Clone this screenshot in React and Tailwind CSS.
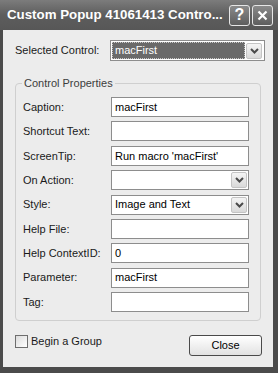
import React from 'react'

const font = { fontFamily: '"Liberation Sans", Arial, sans-serif' }

const Chevron = () => (
  <svg width="9" height="6" viewBox="0 0 9 6">
    <path d="M1 1 L4.5 4.5 L8 1" fill="none" stroke="#4a4a4a" strokeWidth="2" />
  </svg>
)

const DropButton = () => (
  <div className="w-[16px] h-[16px] mr-[1px] shrink-0 flex items-center justify-center rounded-[2px] border border-[#c4c4c4] bg-gradient-to-b from-[#f4f4f4] to-[#d9d9d9]">
    <Chevron />
  </div>
)

const Field = ({ label, value, combo }) => (
  <div className="flex items-center h-[20px]">
    <span className="w-[95px] shrink-0 pl-[7px] text-[11px] text-[#1a1a1a]">{label}</span>
    <div className="w-[138px] h-[20px] shrink-0 flex items-center justify-between border border-[#8d8d8d] bg-white">
      <span className="pl-[3px] text-[11px] text-black">{value}</span>
      {combo && <DropButton />}
    </div>
  </div>
)

const rows = [
  { label: 'Caption:', value: 'macFirst' },
  { label: 'Shortcut Text:', value: '' },
  { label: 'ScreenTip:', value: "Run macro 'macFirst'" },
  { label: 'On Action:', value: '', combo: true },
  { label: 'Style:', value: 'Image and Text', combo: true },
  { label: 'Help File:', value: '' },
  { label: 'Help ContextID:', value: '0' },
  { label: 'Parameter:', value: 'macFirst' },
  { label: 'Tag:', value: '' },
]

export default function App() {
  return (
    <div className="w-[278px] h-[373px] bg-[#4b4b4b] flex flex-col overflow-hidden" style={font}>
      {/* title bar */}
      <div className="h-[30px] flex items-center pl-[7px] pr-[5px] bg-gradient-to-b from-[#7c7c7c] via-[#5d5d5d] to-[#575757]">
        <span className="flex-1 text-white font-bold text-[13.3px] whitespace-nowrap">Custom Popup 41061413 Contro...</span>
        <div className="flex gap-[2px]">
          <div className="w-[21px] h-[21px] rounded-[3px] border border-[#e6e6e6] bg-gradient-to-b from-[#8a8a8a] to-[#5e5e5e] flex items-center justify-center text-white font-bold text-[16px] leading-none">?</div>
          <div className="w-[21px] h-[21px] rounded-[3px] border border-[#e6e6e6] bg-gradient-to-b from-[#8a8a8a] to-[#5e5e5e] flex items-center justify-center">
            <svg width="11" height="11" viewBox="0 0 11 11">
              <path d="M1.5 1.5 L9.5 9.5 M9.5 1.5 L1.5 9.5" stroke="white" strokeWidth="2.2" />
            </svg>
          </div>
        </div>
      </div>

      {/* body */}
      <div className="ml-[3px] mr-[5px] mb-[6px] flex-1 bg-[#ececec] flex flex-col px-[12px] pt-[10px]">
        <div className="flex items-center h-[21px]">
          <span className="w-[95px] shrink-0 text-[11px] text-[#1a1a1a]">Selected Control:</span>
          <div className="w-[155px] h-[21px] shrink-0 flex items-center border border-[#8d8d8d] bg-white p-[1px]">
            <div className="flex-1 h-full bg-[#6a6a6a] outline-1 outline-dotted outline-[#c8c8c8] -outline-offset-1 flex items-center pl-[3px] mr-[1px]">
              <span className="text-white text-[11px]">macFirst</span>
            </div>
            <DropButton />
          </div>
        </div>

        <fieldset className="mt-[17px] h-[243px] border border-[#cfcfcf] rounded-[4px] px-0 pt-[8px] pb-[10px]">
          <legend className="ml-[6px] px-[2px] text-[11px] text-[#3c3c3c] leading-none">Control Properties</legend>
          <div className="flex flex-col gap-[4.4px]">
            {rows.map((r) => (
              <Field key={r.label} {...r} />
            ))}
          </div>
        </fieldset>

        <div className="mt-[14px] flex items-start justify-between">
          <div className="flex items-center gap-[3px] mt-[-2px]">
            <div className="w-[13px] h-[13px] border border-[#6e6e6e] bg-gradient-to-br from-[#dcdcdc] to-white" />
            <span className="text-[11px] text-[#1a1a1a]">Begin a Group</span>
          </div>
          <button className="w-[73px] h-[21px] mr-[-1px] rounded-[3px] border border-[#4a4a4a] bg-gradient-to-b from-white to-[#e2e2e2] text-[11px] text-black">Close</button>
        </div>
      </div>
    </div>
  )
}
